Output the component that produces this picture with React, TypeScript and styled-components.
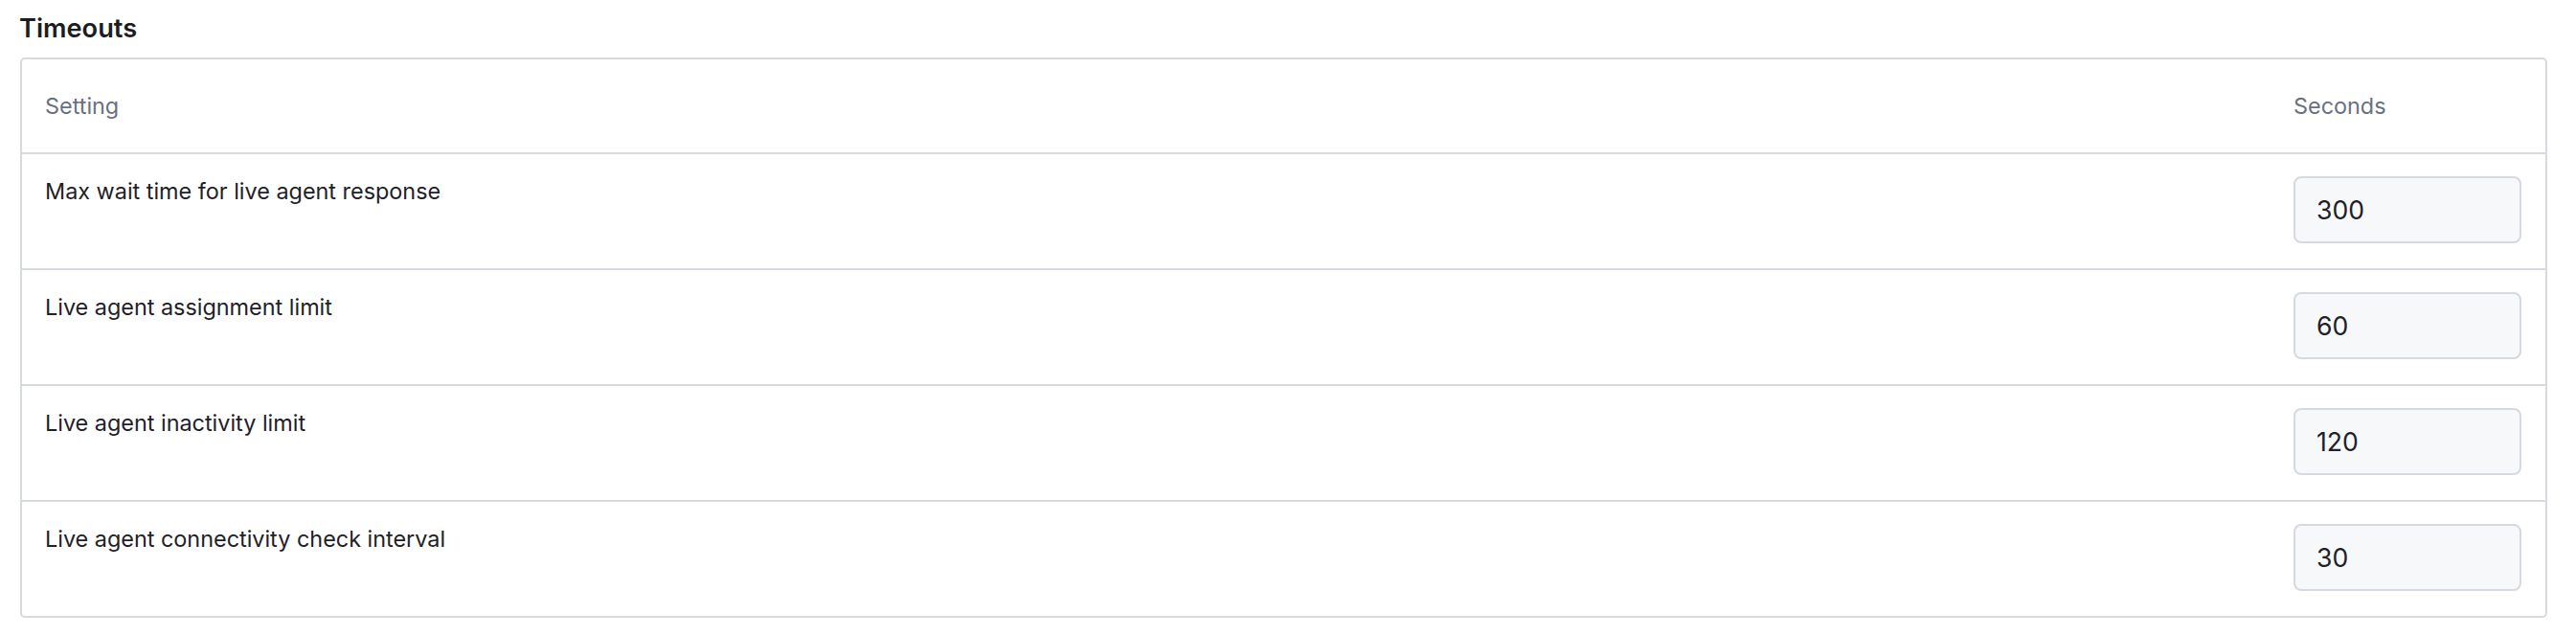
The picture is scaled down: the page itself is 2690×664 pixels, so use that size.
import React from "react";
import styled, { createGlobalStyle } from "styled-components";

const Global = createGlobalStyle`
  html, body { margin: 0; padding: 0; background: #ffffff; }
  body { font-family: Inter, "Noto Sans", sans-serif; color: #1f2129; }
  * { box-sizing: border-box; }
`;

const Page = styled.div`
  padding: 13px 30px 20px 20px;
`;

const Title = styled.h2`
  margin: 0 0 13px 0;
  font-size: 27.2px;
  line-height: 34px;
  font-weight: 600;
  color: #1b1d23;
  letter-spacing: 0;
`;

const Table = styled.div`
  border: 2px solid #d6d9e0;
  border-radius: 5px;
  overflow: hidden;
  margin-left: 1px;
`;

const Row = styled.div<{ $header?: boolean }>`
  display: grid;
  grid-template-columns: 1fr 287px;
  height: ${(p) => (p.$header ? "97px" : "121px")};
  border-top: ${(p) => (p.$header ? "none" : "2px solid #d6d9e0")};
  align-items: ${(p) => (p.$header ? "center" : "start")};
`;

const HeadCell = styled.div`
  padding-left: 24px;
  font-size: 23.4px;
  color: #6a7083;
  font-weight: 400;
`;

const LabelCell = styled.div`
  padding: 22px 0 0 24px;
  font-size: 23.4px;
  line-height: 34px;
  color: #1f2129;
`;

const InputCell = styled.div`
  padding: 23px 0 0 24px;
`;

const NumberInput = styled.input`
  width: 238px;
  height: 70px;
  border: 2px solid #d6d9e0;
  border-radius: 8px;
  background: #f7f8fa;
  padding: 0 22px;
  font-family: Inter, "Noto Sans", sans-serif;
  font-size: 26.6px;
  color: #1f2129;
  outline: none;
`;

const rows = [
  { label: "Max wait time for live agent response", value: "300" },
  { label: "Live agent assignment limit", value: "60" },
  { label: "Live agent inactivity limit", value: "120" },
  { label: "Live agent connectivity check interval", value: "30" },
];

export default function App() {
  return (
    <>
      <Global />
      <Page>
        <Title>Timeouts</Title>
        <Table>
          <Row $header>
            <HeadCell>Setting</HeadCell>
            <HeadCell>Seconds</HeadCell>
          </Row>
          {rows.map((r) => (
            <Row key={r.label}>
              <LabelCell>{r.label}</LabelCell>
              <InputCell>
                <NumberInput defaultValue={r.value} />
              </InputCell>
            </Row>
          ))}
        </Table>
      </Page>
    </>
  );
}
